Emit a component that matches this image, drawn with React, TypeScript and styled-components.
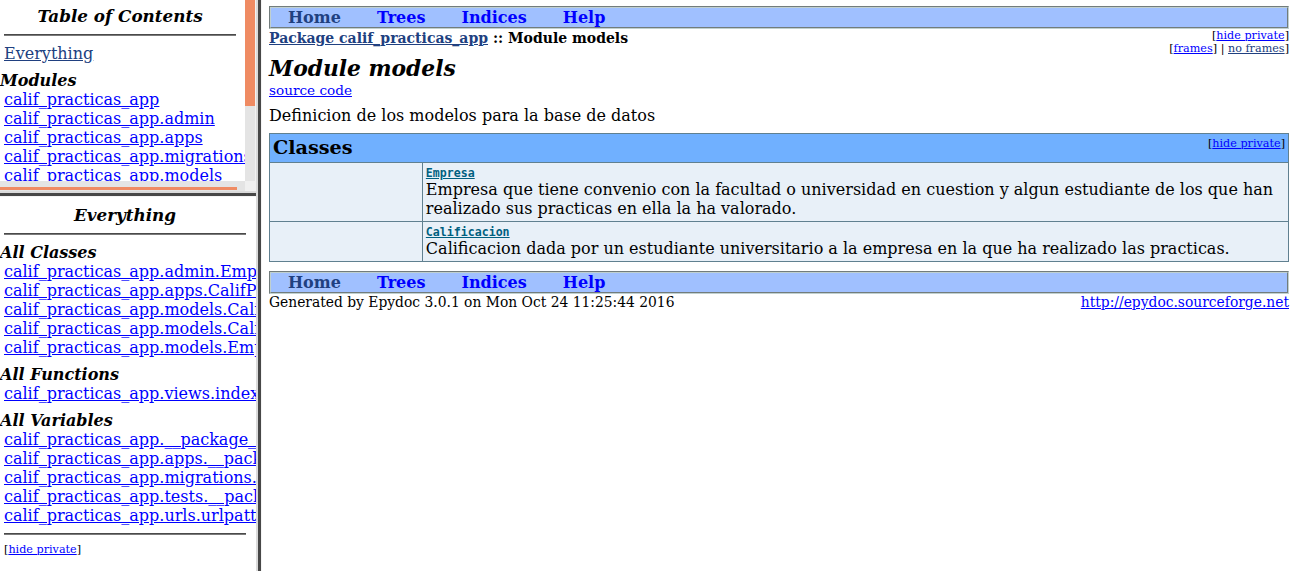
import React from "react";
import styled, { createGlobalStyle } from "styled-components";

const GlobalStyle = createGlobalStyle`
  html, body {
    margin: 0;
    padding: 0;
    height: 100%;
    overflow: hidden;
  }
  body {
    background: #ffffff;
    color: #000000;
    font-family: "DejaVu Serif", serif;
    font-size: 16px;
  }
  #root {
    height: 100%;
  }
`;

const LINK = "#0000ff";
const VISITED = "#204080";

const Frameset = styled.div`
  display: flex;
  width: 1293px;
  height: 571px;
`;

const LeftColumn = styled.div`
  width: 256px;
  display: flex;
  flex-direction: column;
  flex-shrink: 0;
`;

const TocFrame = styled.div`
  height: 191px;
  display: grid;
  grid-template-columns: 245px 11px;
  grid-template-rows: 181px 10px;
`;

const TocTitle = styled.h1`
  margin: 0;
  text-align: center;
  font-size: 16.8px;
  font-weight: bold;
  font-style: italic;
  line-height: 20px;
`;

const TocGroup = styled.h2`
  margin: 8px 0 0 -4px;
  font-size: 16px;
  font-weight: bold;
  font-style: italic;
  line-height: 19px;
`;

const TocBody = styled.div`
  overflow: hidden;
  padding: 6px 9px 0 4px;
`;

const VScroll = styled.div`
  background: #e4e4e4;
  border-right: 1px solid #f2f2f2;
`;

const VThumb = styled.div`
  height: 106px;
  background: #ef8b63;
`;

const HScroll = styled.div`
  background: #e4e4e4;
  display: flex;
  align-items: flex-end;
  padding-bottom: 1px;
`;

const HThumb = styled.div`
  width: 237px;
  height: 3px;
  background: #ef8b63;
`;

const ScrollCorner = styled.div`
  background: #f0f0f0;
`;

const HBorder = styled.div`
  height: 3px;
  border-top: 2px solid #dadada;
  border-bottom: 1px solid #f4f4f4;
  background: #474747;
`;

const VBorder = styled.div`
  width: 3px;
  flex-shrink: 0;
  border-left: 2px solid #dadada;
  border-right: 1px solid #f4f4f4;
  background: #474747;
`;

const IndexFrame = styled.div`
  flex: 1;
  overflow: hidden;
  padding: 8px 10px 0 4px;
`;

const Rule = styled.hr`
  margin: 8px 0;
  border: 0;
  border-top: 1px solid #4a4a4a;
  border-bottom: 1px solid #7a7a7a;
`;

const TocLink = styled.a<{ $visited?: boolean }>`
  display: block;
  white-space: nowrap;
  line-height: 19px;
  color: ${(p) => (p.$visited ? VISITED : LINK)};
  text-decoration: underline;
`;

const SmallOption = styled.div`
  font-size: 11.2px;
  line-height: 13px;
  white-space: nowrap;
`;

const OptionLink = styled.a<{ $visited?: boolean }>`
  color: ${(p) => (p.$visited ? VISITED : LINK)};
  text-decoration: underline;
`;

const MainFrame = styled.div`
  flex: 1;
  overflow: hidden;
  padding: 6px 4px 0 7px;
`;

const Navbar = styled.nav<{ $bottom?: boolean }>`
  display: flex;
  background: #a0c0ff;
  border: 2px groove #c0d0d0;
  line-height: 19px;
  margin-top: ${(p) => (p.$bottom ? "9px" : "0")};
`;

const NavItem = styled.a<{ $visited?: boolean }>`
  font-weight: bold;
  padding: 0 18px;
  text-decoration: none;
  color: ${(p) => (p.$visited ? VISITED : LINK)};

  &:first-child {
    padding-left: 17px;
  }
`;

const TopRow = styled.div`
  display: flex;
  justify-content: space-between;
  align-items: flex-start;
`;

const Breadcrumbs = styled.div`
  font-size: 14px;
  font-weight: bold;
  line-height: 19px;
`;

const Options = styled.div`
  text-align: right;
`;

const Title = styled.h1`
  margin: 1px 0 0;
  font-size: 21.8px;
  font-weight: bold;
  font-style: italic;
  line-height: 26px;
`;

const CodeLinkLine = styled.p`
  margin: 0;
  font-size: 13.6px;
`;

const Docstring = styled.p`
  margin: 8px 0 8px;
  line-height: 19px;
`;

const Summary = styled.table`
  width: 100%;
  border-collapse: collapse;
  background: #e8f0f8;
  border: 1px solid #608090;
`;

const HeaderCell = styled.td`
  background: #70b0ff;
  border: 1px solid #608090;
  padding: 3px;
`;

const HeaderInner = styled.div`
  display: flex;
  justify-content: space-between;
  align-items: flex-start;
`;

const HeaderTitle = styled.span`
  display: block;
  font-size: 19.2px;
  font-weight: bold;
  line-height: 22px;
`;

const Cell = styled.td<{ $side?: boolean }>`
  border: 1px solid #608090;
  padding: 3px;
  vertical-align: top;
  width: ${(p) => (p.$side ? "15%" : "auto")};
  line-height: 19px;
`;

const SummaryName = styled.a`
  display: block;
  font-family: "DejaVu Sans Mono", monospace;
  font-size: 11.6px;
  font-weight: bold;
  line-height: 14px;
  color: #006080;
  text-decoration: underline;
`;

const Footer = styled.div`
  display: flex;
  justify-content: space-between;
  font-size: 13.85px;
  line-height: 16px;
`;

const FooterLink = styled.a`
  color: ${LINK};
  text-decoration: underline;
`;

const modules = [
  "calif_practicas_app",
  "calif_practicas_app.admin",
  "calif_practicas_app.apps",
  "calif_practicas_app.migrations",
  "calif_practicas_app.models",
  "calif_practicas_app.tests",
  "calif_practicas_app.urls",
  "calif_practicas_app.views",
];

const indexGroups = [
  {
    title: "All Classes",
    items: [
      "calif_practicas_app.admin.EmpresaAdmin",
      "calif_practicas_app.apps.CalifPracticasAppConfig",
      "calif_practicas_app.models.Calificacion",
      "calif_practicas_app.models.Calificacion.Meta",
      "calif_practicas_app.models.Empresa",
    ],
  },
  { title: "All Functions", items: ["calif_practicas_app.views.index"] },
  {
    title: "All Variables",
    items: [
      "calif_practicas_app.__package__",
      "calif_practicas_app.apps.__package__",
      "calif_practicas_app.migrations.__package__",
      "calif_practicas_app.tests.__package__",
      "calif_practicas_app.urls.urlpatterns",
    ],
  },
];

const classes = [
  {
    name: "Empresa",
    doc: "Empresa que tiene convenio con la facultad o universidad en cuestion y algun estudiante de los que han realizado sus practicas en ella la ha valorado.",
  },
  {
    name: "Calificacion",
    doc: "Calificacion dada por un estudiante universitario a la empresa en la que ha realizado las practicas.",
  },
];

const NavLinks: React.FC<{ bottom?: boolean }> = ({ bottom }) => (
  <Navbar $bottom={bottom}>
    <NavItem href="#" $visited>
      Home
    </NavItem>
    <NavItem href="#">Trees</NavItem>
    <NavItem href="#">Indices</NavItem>
    <NavItem href="#">Help</NavItem>
  </Navbar>
);

const App: React.FC = () => {
  return (
    <>
      <GlobalStyle />
      <Frameset>
        <LeftColumn>
          <TocFrame>
            <TocBody>
              <TocTitle>Table of Contents</TocTitle>
              <Rule />
              <TocLink href="#" $visited>
                Everything
              </TocLink>
              <TocGroup>Modules</TocGroup>
              {modules.map((m) => (
                <TocLink key={m} href="#">
                  {m}
                </TocLink>
              ))}
            </TocBody>
            <VScroll>
              <VThumb />
            </VScroll>
            <HScroll>
              <HThumb />
            </HScroll>
            <ScrollCorner />
          </TocFrame>
          <HBorder />
          <IndexFrame>
            <TocTitle>Everything</TocTitle>
            <Rule />
            {indexGroups.map((g) => (
              <React.Fragment key={g.title}>
                <TocGroup>{g.title}</TocGroup>
                {g.items.map((item) => (
                  <TocLink key={item} href="#">
                    {item}
                  </TocLink>
                ))}
              </React.Fragment>
            ))}
            <Rule />
            <SmallOption>
              [<OptionLink href="#">hide private</OptionLink>]
            </SmallOption>
          </IndexFrame>
        </LeftColumn>
        <VBorder />
        <MainFrame>
          <NavLinks />
          <TopRow>
            <Breadcrumbs>
              <OptionLink href="#" $visited>
                Package calif_practicas_app
              </OptionLink>{" "}
              :: Module models
            </Breadcrumbs>
            <Options>
              <SmallOption>
                [<OptionLink href="#">hide private</OptionLink>]
              </SmallOption>
              <SmallOption>
                [<OptionLink href="#">frames</OptionLink>]&nbsp;|&nbsp;
                <OptionLink href="#" $visited>
                  no frames
                </OptionLink>
                ]
              </SmallOption>
            </Options>
          </TopRow>
          <Title>Module models</Title>
          <CodeLinkLine>
            <OptionLink href="#">source code</OptionLink>
          </CodeLinkLine>
          <Docstring>Definicion de los modelos para la base de datos</Docstring>
          <Summary>
            <tbody>
              <tr>
                <HeaderCell colSpan={2}>
                  <HeaderInner>
                    <HeaderTitle>Classes</HeaderTitle>
                    <SmallOption>
                      [<OptionLink href="#">hide private</OptionLink>]
                    </SmallOption>
                  </HeaderInner>
                </HeaderCell>
              </tr>
              {classes.map((c) => (
                <tr key={c.name}>
                  <Cell $side />
                  <Cell>
                    <SummaryName href="#">{c.name}</SummaryName>
                    {c.doc}
                  </Cell>
                </tr>
              ))}
            </tbody>
          </Summary>
          <NavLinks bottom />
          <Footer>
            <span>Generated by Epydoc 3.0.1 on Mon Oct 24 11:25:44 2016</span>
            <FooterLink href="#">http://epydoc.sourceforge.net</FooterLink>
          </Footer>
        </MainFrame>
      </Frameset>
    </>
  );
};

export default App;
